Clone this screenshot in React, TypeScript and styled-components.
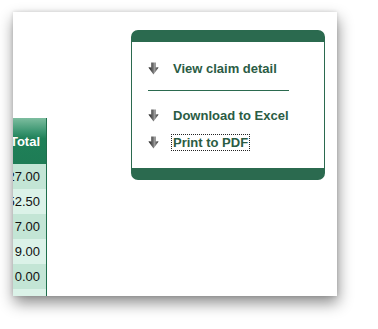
import React from "react";
import styled, { createGlobalStyle } from "styled-components";

const GREEN = "#2b6a4f";

const TOTALS = ["27.00", "52.50", "7.00", "9.00", "0.00", ""];

const MENU_ITEMS = [
    { id: "view", label: "View claim detail", group: 0 },
    { id: "excel", label: "Download to Excel", group: 1 },
    { id: "pdf", label: "Print to PDF", group: 1, focused: true },
];

const GlobalStyle = createGlobalStyle`
    html, body {
        margin: 0;
        padding: 0;
        background: #ffffff;
    }
    body {
        font-family: "Liberation Sans", Arial, Helvetica, sans-serif;
    }
`;

const DownArrow: React.FC = () => (
    <svg width="11" height="13" viewBox="0 0 11 13">
        <defs>
            <linearGradient id="arrowGrad" x1="0" y1="0" x2="1" y2="0">
                <stop offset="0" stopColor="#1e1e1e" />
                <stop offset="0.45" stopColor="#6e6e6e" />
                <stop offset="0.6" stopColor="#9a9a9a" />
                <stop offset="1" stopColor="#2a2a2a" />
            </linearGradient>
        </defs>
        <path
            d="M3.2 0.5 H7.8 V5.4 Q9.6 5 10.6 5.6 L5.5 12.5 L0.4 5.6 Q1.4 5 3.2 5.4 Z"
            fill="url(#arrowGrad)"
        />
    </svg>
);

const App: React.FC = () => {
    return (
        <>
            <GlobalStyle />
            <Page>
                <Window>
                    <TableColumn>
                        <HeaderCell>Total</HeaderCell>
                        {TOTALS.map((value, i) => (
                            <Cell key={`total_${i}`} $shade={i % 2 === 0}>
                                {value}
                            </Cell>
                        ))}
                    </TableColumn>

                    <Menu>
                        {MENU_ITEMS.map((item, i) => (
                            <React.Fragment key={item.id}>
                                {i > 0 && MENU_ITEMS[i - 1].group !== item.group && <Divider />}
                                <MenuItem $first={i === 0 || MENU_ITEMS[i - 1].group !== item.group}>
                                    <DownArrow />
                                    <MenuLink $focused={!!item.focused}>{item.label}</MenuLink>
                                </MenuItem>
                            </React.Fragment>
                        ))}
                    </Menu>
                </Window>
            </Page>
        </>
    );
};

const Page = styled.div`
    width: 378px;
    height: 329px;
    padding: 12px 0 0 13px;
    box-sizing: border-box;
    overflow: hidden;
`;

const Window = styled.div`
    width: 324px;
    height: 284px;
    background: #ffffff;
    display: flex;
    align-items: flex-start;
    overflow: hidden;
    box-shadow: 1px 7px 14px rgba(0, 0, 0, 0.45), 0 0 4px rgba(0, 0, 0, 0.15);
`;

const TableColumn = styled.div`
    width: 33px;
    flex: 0 0 33px;
    margin-top: 106px;
    border-right: 1px solid #1f6e4c;
    display: flex;
    flex-direction: column;
`;

const HeaderCell = styled.div`
    height: 46px;
    display: flex;
    align-items: center;
    justify-content: flex-end;
    padding-right: 6px;
    overflow: hidden;
    background: linear-gradient(#7dbd9f 0%, #3a9570 30%, #1f8058 45%, #1e7c55 100%);
    color: #ffffff;
    font-weight: bold;
    font-size: 13px;
`;

const Cell = styled.div<{ $shade: boolean }>`
    height: 25px;
    display: flex;
    align-items: center;
    justify-content: flex-end;
    padding-right: 6px;
    overflow: hidden;
    white-space: nowrap;
    background: ${(p) => (p.$shade ? "#c3e5d5" : "#dbf2e8")};
    color: #111111;
    font-size: 13px;
`;

const Menu = styled.div`
    width: 176px;
    margin: 18px 0 0 84px;
    border: 1px solid ${GREEN};
    border-top-width: 12px;
    border-bottom-width: 12px;
    border-radius: 7px;
    padding: 18px 0 18px 16px;
    display: flex;
    flex-direction: column;
`;

const Divider = styled.div`
    width: 141px;
    height: 1px;
    margin: 14px 0 16px;
    background: ${GREEN};
`;

const MenuItem = styled.div<{ $first: boolean }>`
    display: flex;
    align-items: center;
    gap: 13px;
    height: 16px;
    margin-top: ${(p) => (p.$first ? "0" : "11px")};
`;

const MenuLink = styled.span<{ $focused: boolean }>`
    font-size: 13px;
    font-weight: bold;
    color: #2b5c44;
    white-space: nowrap;
    line-height: 15px;
    padding: 0 1px;
    outline: ${(p) => (p.$focused ? "1px dotted #222" : "none")};
`;

export default App;
